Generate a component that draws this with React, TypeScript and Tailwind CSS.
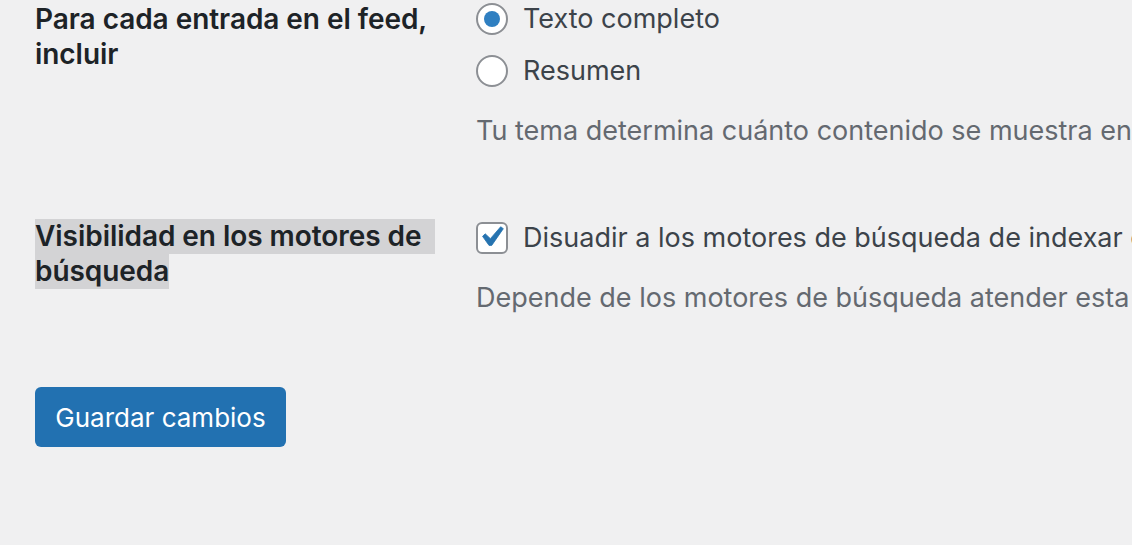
import React from "react";

const font = { fontFamily: "Inter, 'Liberation Sans', sans-serif" };

function Radio({ checked }: { checked?: boolean }) {
  return (
    <span className="flex h-[32px] w-[32px] shrink-0 items-center justify-center rounded-full border-2 border-[#8c8f94] bg-white">
      {checked && <span className="h-[16px] w-[16px] rounded-full bg-[#2f7fc1]" />}
    </span>
  );
}

function Checkbox() {
  return (
    <span className="flex h-[32px] w-[32px] shrink-0 items-center justify-center overflow-visible rounded-[6px] border-2 border-[#8c8f94] bg-white">
      <svg viewBox="0 0 20 20" className="ml-[-3px] mt-[-3px] h-[40px] w-[40px] shrink-0">
        <path d="M14.83 4.89l1.34.94-5.81 8.38H9.02L5.78 9.67l1.34-1.25 2.57 2.4z" fill="#2673b0" stroke="#2673b0" strokeWidth="0.4" strokeLinejoin="round" />
      </svg>
    </span>
  );
}

export default function App() {
  return (
    <div
      className="h-[545px] w-[1132px] overflow-hidden bg-[#f0f0f1] pl-[35px] text-[#1d2327] antialiased"
      style={font}
    >
      {/* Row 1 */}
      <div className="flex">
        <div className="w-[420px] shrink-0 pr-[20px] pt-[2px] text-[28px] font-semibold leading-[35px] tracking-[-0.05px]">
          Para cada entrada en el feed, incluir
        </div>
        <div className="min-w-0 flex-1 overflow-hidden whitespace-nowrap pl-[21px] pt-[3px] text-[27px] text-[#3c434a]">
          <label className="flex h-[32px] items-center gap-[15px]">
            <Radio checked />
            <span>Texto completo</span>
          </label>
          <label className="mt-[20px] flex h-[32px] items-center gap-[15px]">
            <Radio />
            <span>Resumen</span>
          </label>
          <p className="mt-[26px] leading-[36px] text-[#646970]">
            Tu tema determina cuánto contenido se muestra en los navegadores.
          </p>
        </div>
      </div>

      {/* Row 2 */}
      <div className="mt-[70px] flex">
        <div className="w-[420px] shrink-0 pr-[20px] text-[28px] font-semibold leading-[35px] tracking-[-0.05px]">
          <div className="bg-[#d3d3d5]">Visibilidad en los motores de</div>
          <div>
            <span className="bg-[#d3d3d5] pb-[1px]">búsqueda</span>
          </div>
        </div>
        <div className="min-w-0 flex-1 overflow-hidden whitespace-nowrap pl-[21px] pt-[3px] text-[27px] text-[#3c434a]">
          <label className="flex h-[32px] items-center gap-[15px]">
            <Checkbox />
            <span>Disuadir a los motores de búsqueda de indexar este sitio</span>
          </label>
          <p className="mt-[26px] leading-[36px] text-[#646970]">
            Depende de los motores de búsqueda atender esta petición o no.
          </p>
        </div>
      </div>

      {/* Submit */}
      <div className="mt-[71px]">
        <button className="h-[60px] w-[251px] rounded-[6px] bg-[#2271b1] text-[26px] text-white">
          Guardar cambios
        </button>
      </div>
    </div>
  );
}
